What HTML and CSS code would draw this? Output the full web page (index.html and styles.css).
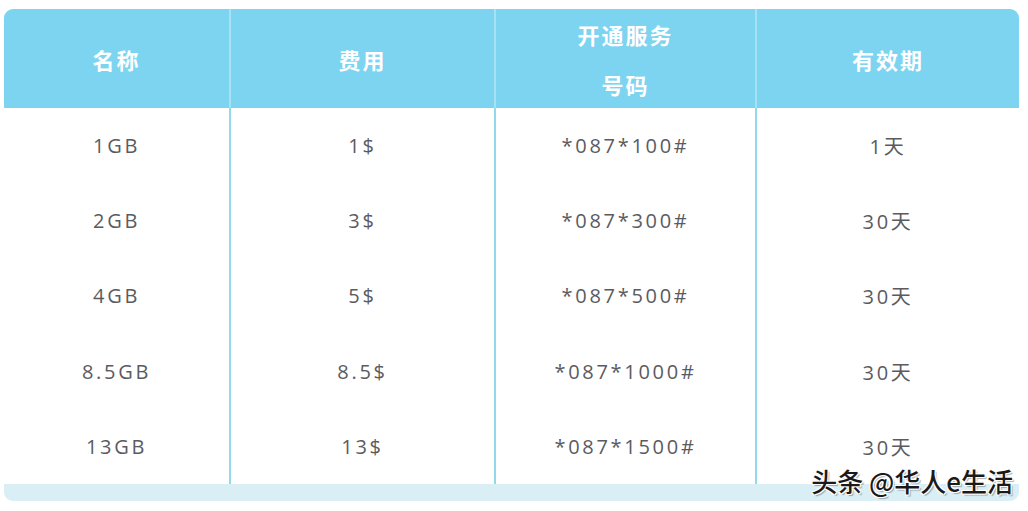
FILE: index.html
```html
<!DOCTYPE html>
<html lang="zh">
<head>
<meta charset="utf-8">
<link rel="stylesheet" href="styles.css">
</head>
<body>
<div class="page">
  <div class="table">
    <div class="row head">
      <div class="cell">名称</div>
      <div class="cell">费用</div>
      <div class="cell two"><span>开通服务</span><span>号码</span></div>
      <div class="cell">有效期</div>
    </div>
    <div class="body">
      <div class="row"><div class="cell">1GB</div><div class="cell">1$</div><div class="cell">*087*100#</div><div class="cell">1天</div></div>
      <div class="row"><div class="cell">2GB</div><div class="cell">3$</div><div class="cell">*087*300#</div><div class="cell">30天</div></div>
      <div class="row"><div class="cell">4GB</div><div class="cell">5$</div><div class="cell">*087*500#</div><div class="cell">30天</div></div>
      <div class="row"><div class="cell">8.5GB</div><div class="cell">8.5$</div><div class="cell">*087*1000#</div><div class="cell">30天</div></div>
      <div class="row"><div class="cell">13GB</div><div class="cell">13$</div><div class="cell">*087*1500#</div><div class="cell">30天</div></div>
    </div>
    <div class="foot"></div>
  </div>
  <div class="mark">头条 @华人e生活</div>
</div>
</body>
</html>
```
FILE: styles.css
```css
html, body { margin: 0; padding: 0; background: #fff; }
body { width: 1028px; height: 511px; overflow: hidden; font-family: "Open Sans", "Noto Sans CJK SC", sans-serif; }
.page { position: relative; width: 1028px; height: 511px; padding: 9px 9px 0 4px; box-sizing: border-box; }
.table { width: 1015px; }
.row { display: grid; grid-template-columns: 225px 265px 261px 264px; }
.head { background: #7dd4f0; height: 99px; border-radius: 9px 9px 0 0; color: #fff; font-weight: 700; font-size: 22px; }
.head .cell { display: flex; align-items: center; justify-content: center; border-left: 2px solid #a6e2f3; letter-spacing: 2px; }
.head .cell:first-child { border-left: none; }
.head .cell.two { flex-direction: column; gap: 21px; padding-top: 3px; }
.head .cell.two span { line-height: 29px; }
.body .row { height: 75.2px; }
.body .cell { display: flex; align-items: center; justify-content: center; color: #5b5b5f; font-size: 20px; letter-spacing: 2.7px; border-left: 2px solid #92d9ea; }
.body .cell:first-child { border-left: none; }
.foot { height: 17px; background: #d9eef5; border-radius: 0 0 9px 9px; }
.mark { position: absolute; right: 15px; bottom: 12px; font-size: 26px; font-weight: 500; color: #1a1a1a; font-family: "Noto Sans CJK SC", sans-serif; text-shadow: 1px 1px 0 #fff, -1px -1px 0 #fff, 1px -1px 0 #fff, -1px 1px 0 #fff, 2px 2px 1px rgba(0,0,0,0.3); letter-spacing: 0; }
```
